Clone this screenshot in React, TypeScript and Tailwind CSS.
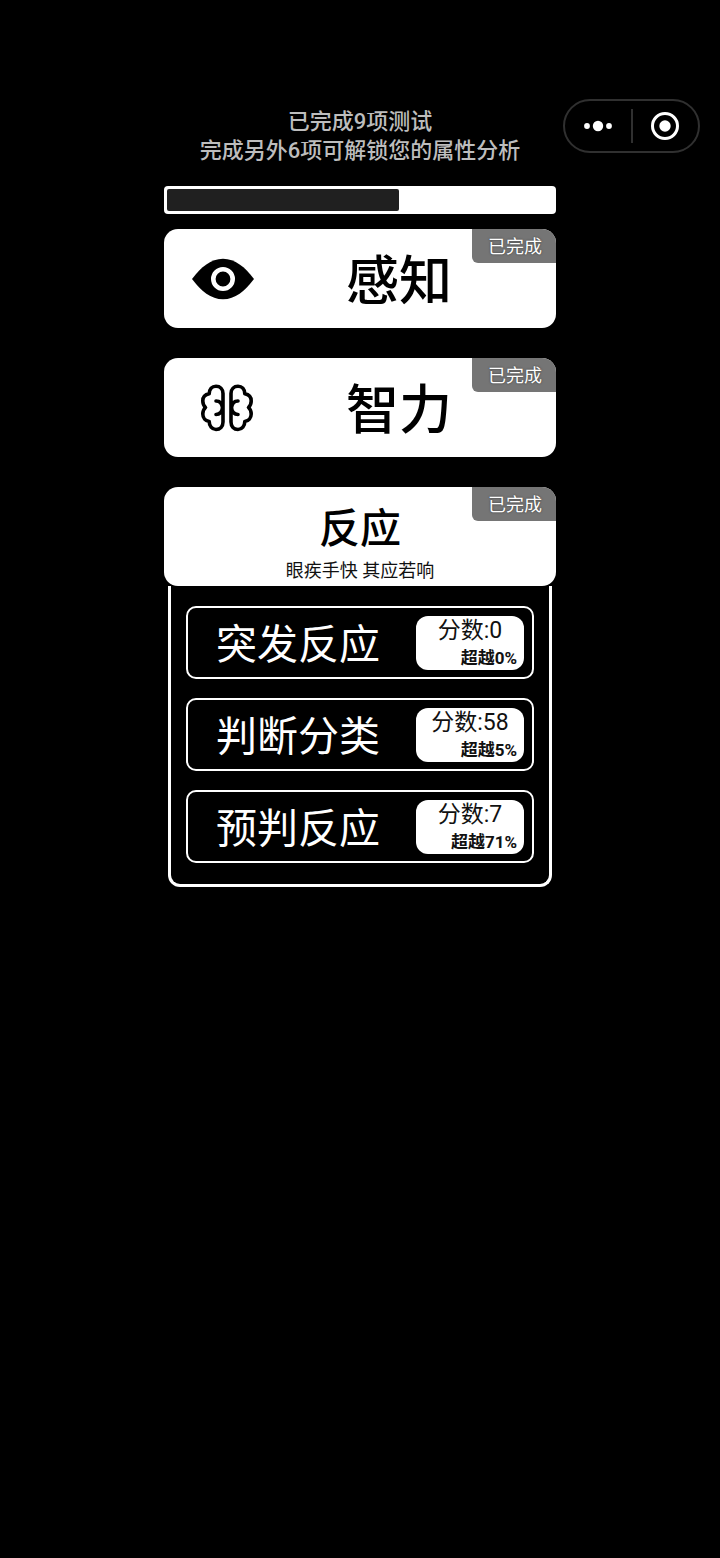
import React from 'react';

interface Test {
  name: string;
  score: number;
  percent: number;
}

const DONE_COUNT = 9;
const TOTAL_COUNT = 15;

const reactionTests: Test[] = [
  { name: '突发反应', score: 0, percent: 0 },
  { name: '判断分类', score: 58, percent: 5 },
  { name: '预判反应', score: 7, percent: 71 },
];

const EyeIcon: React.FC = () => (
  <svg width="62" height="42" viewBox="0 0 62 42" aria-hidden="true">
    <path d="M0 21C9 9 19 .7 31 .7S53 9 62 21C53 33 43 41.300 31 41.300S9 33 0 21Z" fill="#000" />
    <circle cx="31" cy="21" r="9.7" fill="#000" stroke="#fff" strokeWidth="4.6" />
  </svg>
);

// One hemisphere, mirrored for the other side
const hemisphere =
  'M23 9.500C23 5 20 2.200 16 2.200S9.300 5 9.200 9.800C5 10.500 2.800 13.500 2.800 17c0 2.500 1 4.800 2.700 6.500C3.800 25 2.800 27.500 2.800 30c0 4 2.700 7 6.400 7.500C9.200 42 12 45.500 16 45.500S23 42.500 23 38ZM16 17c4 0 6 2.500 6.500 6.700M16 30.500c4 0 6-2.500 6.500-6.700';

const BrainIcon: React.FC = () => (
  <svg width="54" height="48" viewBox="0 0 54 48" fill="none" stroke="#000" strokeWidth="3.6" strokeLinecap="round" strokeLinejoin="round" aria-hidden="true">
    <path d={hemisphere} />
    <path d={hemisphere} transform="translate(54 0) scale(-1 1)" />
  </svg>
);

const DoneBadge: React.FC = () => (
  <span className="absolute top-0 right-0 h-[34px] pl-4 pr-[14px] rounded-bl-md bg-[#757575] text-white text-lg leading-[35px] [text-shadow:0_0_2px_#333]">
    已完成
  </span>
);

const CategoryCard: React.FC<{ title: string; icon: React.ReactNode }> = ({ title, icon }) => (
  <button className="relative flex items-center w-full h-[99px] pl-7 pr-3 rounded-[14px] overflow-hidden bg-white text-black">
    <span className="flex justify-end w-[62px] shrink-0">{icon}</span>
    <span className="flex-1 pt-1.5 text-center text-[53px] leading-[60px] font-medium">{title}</span>
    <DoneBadge />
  </button>
);

const TestRow: React.FC<{ test: Test }> = ({ test }) => (
  <button className="flex items-center justify-between w-full h-[73px] pl-7 pr-2 border-2 border-white rounded-[10px] text-white">
    <span className="pt-1 text-[41px] leading-[60px]">{test.name}</span>
    <span className="flex flex-col w-[108px] h-[54px] px-[7px] rounded-xl bg-white text-[#111]">
      <span className="text-center text-[23px] leading-[30px]">分数:{test.score}</span>
      <span className="text-right text-[17px] leading-6 font-bold">超越{test.percent}%</span>
    </span>
  </button>
);

const Capsule: React.FC = () => (
  <div className="absolute top-[99px] right-5 flex items-center w-[137px] h-[54px] rounded-full border-2 border-[#303030]">
    <button aria-label="更多" className="flex flex-1 justify-center">
      <svg width="30" height="12" viewBox="0 0 30 12" fill="#fff">
        <circle cx="4" cy="6" r="2.900" />
        <circle cx="15" cy="6" r="5.200" />
        <circle cx="26" cy="6" r="2.900" />
      </svg>
    </button>
    <span className="w-0.5 h-[34px] bg-[#303030]" />
    <button aria-label="关闭" className="flex flex-1 justify-center">
      <svg width="28" height="28" viewBox="0 0 28 28">
        <circle cx="14" cy="14" r="12.500" fill="none" stroke="#fff" strokeWidth="3" />
        <circle cx="14" cy="14" r="5.700" fill="#fff" />
      </svg>
    </button>
  </div>
);

export default function App() {
  const progress = (DONE_COUNT / TOTAL_COUNT) * 100;

  return (
    <div className="relative min-h-screen bg-black pt-[107px] pb-10 font-[Roboto,'Noto_Sans_CJK_SC',sans-serif]">
      <Capsule />

      <main className="w-full max-w-[392px] mx-auto">
        <h1 className="text-center text-[22px] leading-[29px] font-medium text-[#bdbdbd]">
          已完成{DONE_COUNT}项测试
          <br />
          完成另外{TOTAL_COUNT - DONE_COUNT}项可解锁您的属性分析
        </h1>

        {/* Progress */}
        <div className="h-7 mt-[21px] p-[3px] rounded-sm bg-white">
          <div className="h-full rounded-xs bg-[#202020]" style={{ width: `${progress}%` }} />
        </div>

        <div className="flex flex-col gap-[30px] mt-[15px]">
          <CategoryCard title="感知" icon={<EyeIcon />} />
          <CategoryCard title="智力" icon={<BrainIcon />} />

          {/* Expanded category */}
          <section>
            <button className="relative flex flex-col items-center w-full h-[99px] pt-3.5 rounded-[14px] overflow-hidden bg-white text-black">
              <span className="text-[41px] leading-[56px] font-medium">反应</span>
              <span className="text-lg leading-7 text-[#111]">眼疾手快 其应若响</span>
              <DoneBadge />
            </button>
            <div className="flex flex-col gap-[19px] mx-1 px-[15px] pt-5 pb-[21px] border-x-3 border-b-3 border-white rounded-b-xl">
              {reactionTests.map((test) => (
                <TestRow key={test.name} test={test} />
              ))}
            </div>
          </section>
        </div>
      </main>
    </div>
  );
}
